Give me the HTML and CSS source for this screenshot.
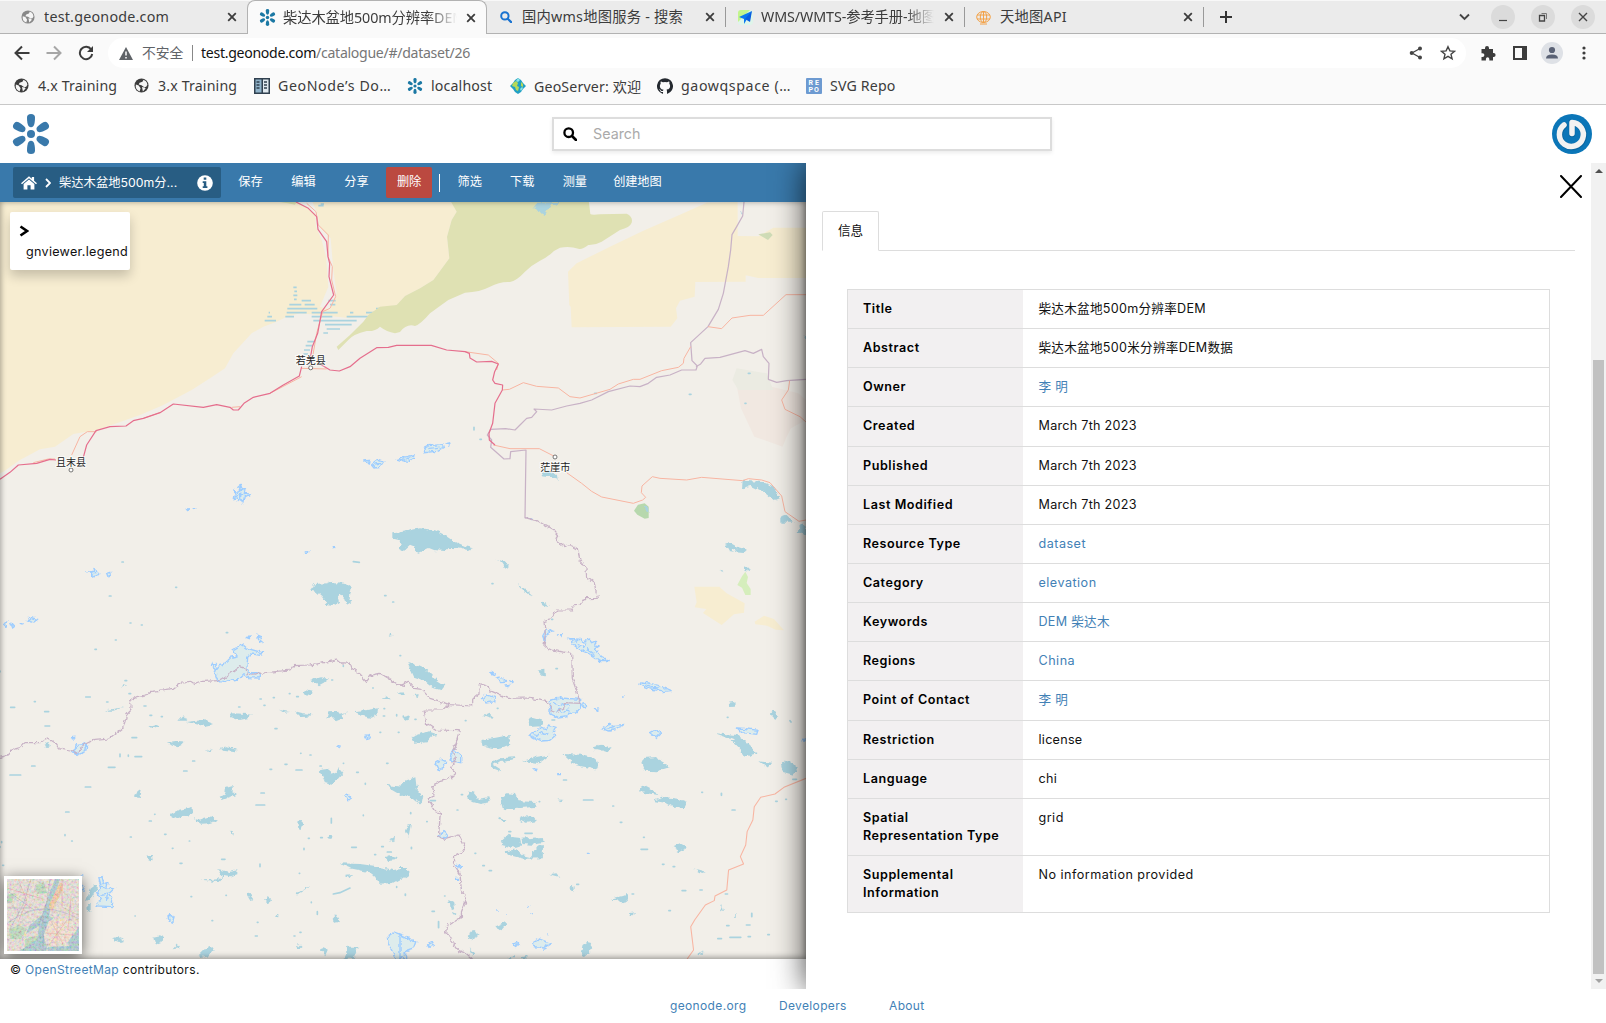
FILE: index.html
```html
<!DOCTYPE html>
<html lang="zh">
<head>
<meta charset="utf-8">
<title>柴达木盆地500m分辨率DEM</title>
<link rel="stylesheet" href="styles.css">
</head>
<body>
<svg class="defs" width="0" height="0">
  <defs>
    <symbol id="geonode" viewBox="0 0 38 40"><g fill="currentColor"><circle cx="19" cy="20" r="4"/><g id="petals"><path id="petal" d="M15 3.500Q15 0 19 0t4 3.500q0 6-1.500 8.500q-2.500 2.500-5 0Q15 9.500 15 3.500z"/><use href="#petal" transform="rotate(60 19 20)"/><use href="#petal" transform="rotate(120 19 20)"/><use href="#petal" transform="rotate(180 19 20)"/><use href="#petal" transform="rotate(240 19 20)"/><use href="#petal" transform="rotate(300 19 20)"/></g></g></symbol>
    <symbol id="globe" viewBox="0 0 16 16"><circle cx="8" cy="8" r="7.500" fill="currentColor"/><path d="M2 7l3 1 2 3-1 3.300A6.500 6.500 0 0 1 2 7zM8 1.600l2 .4-1 2-3 1-1 2 3 .6 3 2.200 2-.5 1.300-2A6.500 6.500 0 0 0 8 1.600zM8.500 9.500l2.500.5 1.500 1-3 3.400z" fill="#f5f5f5"/></symbol>
    <symbol id="x" viewBox="0 0 10 10"><path d="M1.200 1.200l7.600 7.600M8.800 1.200L1.200 8.800" stroke="currentColor" stroke-width="1.800" fill="none"/></symbol>
    <symbol id="mag" viewBox="0 0 14 14"><circle cx="5.700" cy="5.700" r="4.300" fill="none" stroke="currentColor" stroke-width="2.300"/><path d="M9 9l4 4" stroke="currentColor" stroke-width="2.600" stroke-linecap="round"/></symbol>
    <filter id="rough" x="-5%" y="-5%" width="110%" height="110%" color-interpolation-filters="sRGB"><feTurbulence type="fractalNoise" baseFrequency=".07" numOctaves="2" seed="7"/><feDisplacementMap in="SourceGraphic" scale="16" xChannelSelector="R" yChannelSelector="G"/></filter>
  </defs>
</svg>

<header class="tabstrip">
  <div class="tab t1"><svg class="i14 gray"><use href="#globe"/></svg><span>test.geonode.com</span><svg class="close"><use href="#x"/></svg></div>
  <div class="tab t2 active"><svg class="i17 teal"><use href="#geonode"/></svg><span class="fade">柴达木盆地500m分辨率DEM</span><svg class="close"><use href="#x"/></svg></div>
  <div class="tab t3"><svg class="i11 blue"><use href="#mag"/></svg><span>国内wms地图服务 - 搜索</span><svg class="close"><use href="#x"/></svg></div>
  <div class="tab t4"><svg class="i15" viewBox="0 0 15 15"><rect width="15" height="15" rx="3" fill="#dff5ea"/><path d="M0 3q0-3 3-3h9L0 12z" fill="#c3f58c"/><path d="M14 1L1 7l5 2v5z" fill="#0b78f0"/><path d="M14 1L7 9l5 3z" fill="#0a5ee0"/></svg><span class="fade">WMS/WMTS-参考手册-地图</span><svg class="close"><use href="#x"/></svg></div>
  <div class="tab t5"><svg class="i15" viewBox="0 0 15 15" fill="none" stroke="#f3a248" stroke-width="1"><ellipse cx="7.500" cy="7" rx="6.800" ry="5.500"/><ellipse cx="7.500" cy="7" rx="3.200" ry="5.500"/><path d="M1 5h13M1 9h13M7.500 1v12M4 14h7"/></svg><span>天地图API</span><svg class="close"><use href="#x"/></svg></div>
  <svg class="plus" viewBox="0 0 12 12"><path d="M6 0v12M0 6h12" stroke="#333" stroke-width="2"/></svg>
  <div class="wincontrols">
    <svg class="chev" viewBox="0 0 11 8"><path d="M1 1.500l4.500 4.500L10 1.500" fill="none" stroke="#444" stroke-width="1.900"/></svg>
    <span><svg viewBox="0 0 24 24"><path d="M8 15.500h8" stroke="#444" stroke-width="1.200"/></svg></span>
    <span><svg viewBox="0 0 24 24" fill="none" stroke="#444"><path d="M8.500 10.500h5v5.500h-5z" stroke-width="1.300"/><path d="M10.500 8.500h5v5.500" stroke="#777"/></svg></span>
    <span><svg viewBox="0 0 24 24"><path d="M8 8l8 8M16 8l-8 8" stroke="#444" stroke-width="1.400"/></svg></span>
  </div>
</header>

<nav class="toolbar">
  <svg class="nav" viewBox="0 0 16 16"><path d="M15.500 8H2M8 1.500L1.500 8 8 14.500" fill="none" stroke="#3c3c3c" stroke-width="2"/></svg>
  <svg class="nav" viewBox="0 0 16 16"><path d="M.5 8H14M8 1.500L14.500 8 8 14.500" fill="none" stroke="#a6a6a6" stroke-width="2"/></svg>
  <svg class="nav" viewBox="0 0 16 16"><path d="M13.200 4.500A6.200 6.200 0 1 0 14.200 9" fill="none" stroke="#3c3c3c" stroke-width="2"/><path d="M15 1v6H9z" fill="#3c3c3c"/></svg>
  <div class="omnibox">
    <svg class="warn" viewBox="0 0 14 13"><path d="M7 0l7 13H0z" fill="#5f6368"/><path d="M7 4.500v4M7 10v1.600" stroke="#fff" stroke-width="1.500"/></svg>
    <span class="insecure">不安全</span><i></i><span class="url"><b>test.geonode.com</b>/catalogue/#/dataset/26</span>
    <svg class="share" viewBox="0 0 14 14"><path d="M11 2.500L3 7l8 4.500" fill="none" stroke="#444" stroke-width="1.300"/><circle cx="11" cy="2.500" r="2" fill="#444"/><circle cx="2.700" cy="7" r="2" fill="#444"/><circle cx="11" cy="11.500" r="2" fill="#444"/></svg>
    <svg class="star" viewBox="0 0 16 16"><path d="M8 1.700l1.900 4.200 4.600.4-3.500 3 1.100 4.500L8 11.400l-4.100 2.400L5 9.300l-3.500-3 4.600-.4z" fill="none" stroke="#444" stroke-width="1.400"/></svg>
  </div>
  <svg class="nav ext" viewBox="0 0 16 16"><path d="M1.500 4H5V3a2 2 0 0 1 4 0v1h4v4h.6a2 2 0 0 1 0 4H13v3.500H9.300V14a1.700 1.700 0 0 0-3.400 0v1.500H1.500V12H2.500a1.800 1.800 0 0 0 0-3.800h-1z" fill="#3c3c3c"/></svg>
  <svg class="side" viewBox="0 0 14 14"><path d="M1 1h12v12H1z" fill="none" stroke="#3c3c3c" stroke-width="2"/><path d="M9 0h5v14H9z" fill="#3c3c3c"/></svg>
  <svg class="person" viewBox="0 0 22 22"><circle cx="11" cy="11" r="11" fill="#dee1e6"/><circle cx="11" cy="8" r="3.100" fill="#5a6275"/><path d="M5 16.500q0-4 6-4t6 4z" fill="#5a6275"/></svg>
  <svg class="dots" viewBox="0 0 4 14"><g fill="#3c3c3c"><circle cx="2" cy="2" r="1.600"/><circle cx="2" cy="7" r="1.600"/><circle cx="2" cy="12" r="1.600"/></g></svg>
</nav>

<nav class="bookmarks">
  <a class="b1"><svg class="i15"><use href="#globe"/></svg>4.x Training</a>
  <a class="b2"><svg class="i15"><use href="#globe"/></svg>3.x Training</a>
  <a class="b3"><svg class="i16" viewBox="0 0 16 16"><path fill="#30404f" d="M0 0h16v16H0z"/><path fill="#8fb2c9" d="M1.500 1.500h6v13h-6z"/><path fill="#dfe8ee" d="M9 1.500h5.500v13H9z"/><path d="M2.500 4h3M2.500 7h3M2.500 10h3M10 4h3M10 7h3M10 10h3" stroke="#30404f" stroke-width="1.400"/></svg>GeoNode’s Do…</a>
  <a class="b4"><svg class="i16 teal"><use href="#geonode"/></svg>localhost</a>
  <a class="b5"><svg class="i16" viewBox="0 0 16 16"><path fill="#21a0c4" d="M8 0l3 2 2 3 3 3-3 3-2 3-3 2-3-2-2-3-3-3 3-3 2-3z"/><path fill="#b6d957" d="M3 5l3-2 2 2-1 3 2 1-1 4-2-1-1-3-3-1zM11 4l2 2v3l-2-1z"/><path fill="#8ee4e4" d="M8 0l2 2-2 2-2-1zM12 9l1 1-2 3-1-2z"/></svg>GeoServer: 欢迎</a>
  <a class="b6"><svg class="i16" viewBox="0 0 16 16"><path fill="#24292f" d="M8 .2a8 8 0 0 0-2.530 15.600c.4.070.55-.17.55-.38v-1.500c-2.230.48-2.700-.95-2.700-.95-.36-.92-.89-1.170-.89-1.170-.73-.5.050-.49.050-.49.800.06 1.230.83 1.230.83.720 1.220 1.870.87 2.330.66.070-.52.280-.87.500-1.070-1.780-.2-3.640-.89-3.640-3.950 0-.87.310-1.590.82-2.150-.08-.2-.36-1.020.08-2.120 0 0 .670-.21 2.200.82a7.600 7.600 0 0 1 4 0c1.530-1.040 2.200-.82 2.200-.82.440 1.100.160 1.920.080 2.120.510.560.820 1.270.820 2.150 0 3.070-1.870 3.750-3.650 3.950.290.250.540.730.540 1.480v2.200c0 .21.150.46.550.380A8 8 0 0 0 8 .2z"/></svg>gaowqspace (…</a>
  <a class="b7"><svg class="i16" viewBox="0 0 16 16"><rect width="16" height="16" rx="1" fill="#6d9ad1"/><g fill="#fff" font-family="Roboto" font-size="7" font-weight="700"><text x="2.600" y="7.300" textLength="10.500">RE</text><text x="2.600" y="14.300" textLength="10.500">PO</text></g></svg>SVG Repo</a>
</nav>

<section class="brandbar">
  <svg class="logo"><use href="#geonode"/></svg>
  <label class="search"><svg><use href="#mag"/></svg><span>Search</span></label>
  <svg class="avatar" viewBox="0 0 40 40"><circle cx="20" cy="20" r="20" fill="#0b76b8"/><g fill="none" stroke-linecap="round"><path d="M12.500 11.500A12 12 0 1 0 20 9v11" stroke="#07568a" stroke-width="6.500" opacity=".5"/><path d="M12 11A12 12 0 1 0 20 8.500v11" stroke="#f2f2f2" stroke-width="5.500" stroke-linejoin="round"/></g></svg>
</section>

<main class="workspace">
  <div class="viewer">
    <nav class="actions">
      <div class="crumb">
        <svg class="home" viewBox="0 0 16 14"><path d="M0 7.200L8 .3l2.800 2.400V1h2.300v3.700L16 7.200l-1 1.100L8 2.300 1 8.300z" fill="#fff"/><path d="M2.600 8L8 3.500 13.400 8v5.500H9.600V9.300H6.400v4.200H2.600z" fill="#fff"/></svg>
        <svg class="arrow" viewBox="0 0 6 10"><path d="M1 1l4 4-4 4" fill="none" stroke="#fff" stroke-width="1.800"/></svg>
        <span>柴达木盆地500m分...</span>
        <svg class="info" viewBox="0 0 16 16"><circle cx="8" cy="8" r="7.800" fill="#fff"/><path d="M6.700 2.500h2.600v2.300H6.700zM5.700 6.200h3.600v5h1.100v1.700H5.700v-1.700h1.100V7.900H5.700z" fill="#285d83"/></svg>
      </div>
      <a>保存</a><a>编辑</a><a>分享</a><a class="danger">删除</a><i></i><a>筛选</a><a>下载</a><a>测量</a><a>创建地图</a>
    </nav>
    <div class="map">
      <svg class="canvas" viewBox="0 202 806 757" preserveAspectRatio="none">
        <!-- land cover -->
        <g transform="translate(0 160) scale(.33333)">
          <path class="sand" d="M0 120H1352L1370 155 1355 180 1341 230 1348 295 1315 340 1300 360 1260 385 1215 408 1190 435 1140 445 1105 465 1050 475 1010 470 900 460 860 470 830 485 790 500 755 520 700 580 675 625 630 655 575 690 490 735 420 765 350 790 290 810 220 822 165 860 120 868 60 900 10 935 0 940z"/>
          <path d="M885 120H935L952 160 962 205 992 235 1000 330 1010 400 990 450 960 440 985 380 978 290 965 240 948 200 945 160z" fill="#f2efe9"/>
          <path d="M840 126h50l-5 8-22-4z" fill="#dce0b0"/>
          <path class="stripe" d="M880 382h10M883 394h8M880 406h12M882 418h8M905 422h28M868 434h36M914 434h30M862 446h90M860 458h60M935 458h78M856 470h26M935 470h62M1050 458h10M1098 458h34M1040 470h64M1128 446h12M960 482h110M975 494h80M940 482h20M980 507h40M970 519h14M806 458h4M802 470h14M794 482h34M922 545h22M917 557h20M912 570h18M910 582h14M985 422h22M990 434h16M955 137h16M962 132h10"/>
        </g>
        <g transform="translate(400 190) scale(.33333)">
          <path class="scrub" d="M150 30H566L571 72Q575 76 600 73L680 71Q700 80 695 98Q690 112 660 120L605 155Q585 166 565 165Q545 180 535 176Q510 168 480 173L462 183Q445 200 420 212Q395 225 375 245Q350 272 330 276Q300 274 270 290Q240 306 195 308L145 330Q110 355 90 370Q60 405 45 408Q20 400 0 426L-15 430Q-40 425-60 410-75 425-100 423Q-140 432-155 450L-185 480-190 470-150 435-110 395-95 375-60 350-10 345 15 318 60 295 100 270 115 250 148 205 141 140 155 90 170 65z"/>
          <path class="sand" d="M504 245L530 220 630 170 730 122 850 70 920 38 1013 36V138L1075 139 1120 113H1218V264H1075L1037 256V275L886 276 884 320 840 332 828 355 832 385 812 410 515 412 512 350 508 345z"/>
          <path class="water" d="M400 55L412 38 478 36 470 50 455 40 435 75zM1020 72l6-10 2 12zM425 848l18-8 28 15 2 14-25-8-24-2z"/>
          <path d="M1075 133l35-6 8 8-14 15z" fill="#cfdcb7"/>
          <path d="M1005 560l10-15 100 45 80 20 23 20v60l-45 25-15 30-10 25-85-30-40-85z" fill="#f1e8e1"/>
          <path d="M1010 535l90 15 20 50h-105l-18-30z" fill="#ebebe2"/>
          <path d="M702 962l12-18 20-4 12 10v34l-12 2-22-12z" fill="#b7d8ad"/>
          <path class="water" d="M735 950l10 2v15l-8-4zM1028 872l60 4 30 12 22 35-18 8-32-26-36-18-28 8zM1141 980l18-6 25 24h-43zM1213 440h5v12z"/>
          <path class="dot" d="M584 610h5M868 613h5M222 712v8M240 748h4M1045 550h5M1035 640h3"/>
          <path class="ice" d="M72 775l15-8 40-3 3 8-22 12-34 4zM85 776l30-4M138 761l10-2-2 6zM2 802l18-2 22-6-2 12-10 8-26-2zM14 808l16-6"/>
        </g>
        <!-- glaciers and lakes, north -->
        <g transform="translate(0 160) scale(.33333)"><path class="ice" d="M1090 903l18-2-2 8zM1115 912l18-14 18 6-12 18-14 2zM1122 912l22-2M1192 898l20-6v12zM712 983l10-8 8 14"/></g>
        <g transform="translate(0 480) scale(.33333)">
          <path class="ice" d="M722 15l2 15 12-6-3 16 18 2-2 6-16 4-4 16-6-10-8 6-2-10-12 2 8-10-6-14 12 8zM716 44l20 0M722 36v20M557 88l10-2 1 4-8 2zM581 86h5M264 276l20 2-2-12 6 2 8 16-12 6zM320 280l12-4 2 8-10 6zM916 216l10-1-1 5-8 1zM998 200h8M10 432l10-6-2 14zM32 428l6 16 5-4zM80 426l10-14 22 6-10 8-14-4zM62 432l6-2M738 472l12-1-2 5zM772 466l10 4 4 14-6 2zM635 556l10-6 8 10-6 7zM695 512l30-18 12 10 50 14-4 8-30-4-10 10-2 30 8 15 32 2v15l-36-1-15-10-15 15-22 2-20 8-20-6-10-28 15-17 15-5 20-20 18-4-2-10zM222 806l8-12 10 4 16-8 4 6-2 14zM214 773l10-1-2 5zM1095 770l10-3 4 8-8 4zM1012 798h8v4"/>
          <path class="water" d="M1177 160l38-4v55l-18-30-20-5zM929 332l15-20 38-2 12-5 10 5 32 1 16 12-6 32 8 12-15 8-2-16-14-16-10 10 4 15-10 8-25-3-18-25-15-13zM930 600l30-8 26 4-15 12-14 8-12-8zM910 638l10-10 18 4-3 16-20-2zM690 710l8-10 42 2 16 2-10 10-30 6zM560 726l50-6 32 12-30 6zM535 722l15-16 12 16zM885 694l24 6 26 2-10 8-22 1zM838 690l34 6-20 2zM985 694l30-2 5 12 25-8-20 10 5 10-20 8-10-12-20 2zM1060 694l40-4 34-5-2 18-20 10-20-4-16-8zM1142 656l18-10 12 12zM1163 470l12-12 2 10zM505 790l40-6 10 6-30 8zM360 620l12-8 10 4zM448 738l22-6 10 5-22 8zM310 692l60-10-30 10zM655 808l20-5 35 1v4zM1192 640l22-2v7zM136 790l10-4 3 12-8 3z"/>
          <path class="dot" d="M366 246h4M527 322h3M328 348h5M679 458h4M285 508h4M390 429h3M424 435h3M346 480h3M1178 366h3M1154 347h4M375 602h5M387 641h5M257 651h14M320 666h4M103 665h3M32 682h12M134 695h12M135 738h14M396 773h14M432 678h6M450 706h5M484 710h3M716 681h4M780 657h4M820 653h3M890 650h5M868 641h2M995 600h3M1152 686h2M1118 624h2M1030 557v2M1190 704v4M1210 708v3M1060 245l18 2M825 746h6M792 676h3M0 573v3M1140 757h2M1195 757h2M1150 708h4"/>
        </g>
        <g transform="translate(400 480) scale(.33333)">
          <path class="water" d="M0 157l30-6 30-6 45 6 25 12 30 20 35 15 27 7-20 5-35-6-28 1-5 8-32-3-15-6-32 14-10-6v-12l-15-6-20 18-10-5zM288 236l26 10 12 14-4 10-10-8-8-12zM353 312l18 12 28 22-22-8zM421 366l10-1 16 13-18-4zM22 546l20 6 40 18 26 28 28 18-12 15-26-8-34-25-22-8zM413 572l20-3 2 20-8-2zM977 195l14-6 22 12 28 8-10 10-26-2 4-14-12 4 4 8-14-2zM957 272l14 4-8 2zM1030 276l4-14 16 6zM1188 156l20-24 10 8v24zM989 668l14-2 2 14-14 1zM1110 700l8-6 20 14-10 8-12-4zM942 760l70 5 24 18 24 26h-28l-34-30zM384 720l15-6 32 10-5 15-35 2zM245 780l42-7 42-8v22l-24 18-30-2-28-6zM38 770l46-16 32 10-20 5-16 18-36 4zM578 802l28-8 28 14h-50zM250 706l16-8 18 15-18-1zM40 646l16-4-4 12zM5 712l25-6-5 18z"/>
          <path class="dot" d="M276 311h3M468 566h4M455 418h3M0 527h2M0 640h10M45 718h3M292 685h2M196 722h2M1170 722l3 4M982 712h2M456 720h8"/>
          <path d="M883 320h75l22 20 54 30-2 28-30 5-37 32-56-36 10-12-35-5 6-15zM1064 425l28-18 30 10 30 34-25-2-26-12-35-4z" fill="#f7edd1"/>
          <path d="M1036 275l-10 14-14 26 14 8 10 22h16v-18l-12-18 4-18z" fill="#d5eebc"/>
          <path class="ice" d="M388 116l10 1-2 5zM428 468l10-18 18 4-16 8-6 22zM478 464h8l-3 5zM509 476l20 8 12-10 8 12 20-6 6 8 14-6-6 16 12 2-10 6 20 24 24 12h-30l-30-20-24-10-20-14zM530 492l20 8 8-12M560 508l20 14M265 578l10-1 12 8zM290 594l16-4 12 14-16 1zM326 602l12 3-5 3zM312 616l14-2-2 6zM718 614l12-8 20 4 24 6 20 8 18 8-25 3-35-8zM735 614l20 8 20 2M245 655l15-10 26 8-2 12-26 4zM452 660l30-6 60 4v25l-15 16-22 2-2 9-28 4-22-12-5-18zM462 670l14 8 14-8 16 10M466 696l12-8 12 10 10-8 12 4M544 675l10-4 8 8-8 6zM582 686l12 1-4 4zM385 764l20-10 15-12 20 4 8-10 20 6-8 14 4 15-12 10-28 2-24-10zM400 764l14 4 12-12 16 8M605 746l22-16 16 6 25-2-15 12-24 7zM620 746l22-6M749 758l14-8 20 8-15 15zM1012 744l20 1 42 6-4 12-45-5zM666 651h8M1209 779h8"/>
        </g>
        <!-- lakes, south -->
        <g transform="translate(0 740) scale(.33333)">
          <path class="ice" d="M218 36l18-20 22-4-4 20-20 14zM1034 168l10-6 10 12-10 8zM1012 19h8M242 408h8M246 432q12 8 2 24M288 498l14-22-10-22 12-12-8-28 10-4 6 24 12-4-4 14 22 2-14 14 10 12-4 14 4 14zM298 440l24 6M302 466l20-4-2 18M504 530l8-6 10 14v12l-10-4zM1162 590l20-14 20 8 15 20v52h-30l-10-22-12-20z"/>
          <path class="water" d="M500 10l30-5 24 5-20 9zM658 28l22-6 34 8-10 4zM612 36l25-8v4zM405 172l10-24 10 4-5 22zM660 172l16-10 2-18 20-6v18l10 10-20 6-20 8zM508 226l30-16 36-9 5 22-30 6-22 8zM578 234l20 6 14 -6 14-4 25 12-25 8-24 1zM892 248l8-10 9 12-4 20-10-2zM958 90l30-4 2 16 20-6 6-14 14 16-16 18-18 18-20-4-8-20zM1162 134l20 4 34 2v22l-26-4-18-10zM1016 370l64 2 44 6 56 12 32-4-2 25-32 18-42 2-10-20-16-14-60-12zM600 422l52-4 14-10-14-20 14 2 20 6 26-5v15l-20 6-20-4-16 18zM442 350l14 -2 2 12-8 5zM258 484l14-38 18-14v16l-15 26zM258 492h14v22l-10 4zM738 460l8-2 14 20-10 3zM792 482l14-10 10 6-6 10zM884 462l24-14 25-11-22 14-18 12zM1042 452l8-5M994 462l14-5M998 536l10-10 12 20-18 2zM460 590l20-4 10 5-2 14-24 10zM518 625l14-16 8 12zM596 646l18-18 18-10 10 8-20 24-20 4zM336 598l20-6 18 12-14 2zM825 530l10-12v14zM1034 656l8-36h36l-12 10-4 26zM960 628l10-6 14 6-8 18zM890 618l6-5 9 8-8 6zM1156 352l14-6 20 4-4 8-24 2zM984 290l10-6 7 10-12 3zM692 272l10 2-2 13zM1168 298l14-8-2 14zM1036 404l20-2-8 10z"/>
          <path class="dot" d="M142 10v10M360 42v8M385 45v4M405 50h20M325 82h20M95 78h10M30 105h32M256 141h16M197 216h10M551 93h10M578 63h6M783 159h10M768 195h26M810 88h5M888 90h18M902 40h1M930 45h3M1030 70h1M960 78h4M1096 130v3M994 235v14M1090 225v2M195 284v3M215 303h2M391 291h3M494 283h4M540 370h6M517 325h2M568 303h1M464 223h1M448 243h6M665 358h10M780 372v8M573 470h2M405 528h1M636 542h2M766 588h6M678 466h1M952 515v8M934 486v2M900 577h3M882 588h3M912 325v4M925 295h3M962 293h5M1055 322h14M1124 344h3M1162 336h12M1145 320h5M0 320v2M5 305v3M8 376h3M1070 97h5M1160 70h4M1190 440v2M855 73h6M898 400h1M772 547h2M1000 462l20-4 30-14"/>
        </g>
        <g transform="translate(400 740) scale(.35714 .33333)">
          <path class="ice" d="M138 52l14-24 18 18v22l-20-4zM98 70l18-12 14 8-8 16-14 8zM108 290l16-18 8 8-4 14zM158 372l14 8-4 6zM154 415h10M0 585l10 5 14 8 20 8-6 18-18 6-18 24H0zM78 614l12-7 4 8-10 7zM318 612l8-5 5 8-8 4zM372 610l20-12 30 12-20 14-24-4zM375 87l8 1-2 5zM440 101h8M526 340h8M295 522h4M270 510h4M358 498h4M368 521h4M410 584h5M1127 0h10M172 443v3"/>
          <path class="water" d="M228 2h76l2 12-30 12-40-10zM42 0h26l-10 8zM255 68l30-14 40-2-4 6-44 6-16 12 30 20-36-14zM345 62l40-12 34-6-14 14-16 12zM455 42l50 2 45 12 7 24-12 8-22-6-30-6-22-18zM538 22l25-8 30 12-14 10zM676 68l6-14 38-3 12 16 24 14-24 8-12 8-34-2zM925 0h30l14 18 36 20-40 12-14-22zM1067 72l14-10 26 10 5 20-10 12-30-8zM1006 64l36 4-10 16zM0 140l15-18 28-10 4 36 18 22-4 20-22-8-18-16-22 2zM672 146l16-9 22 12 10 16-20-4-26-4zM708 182l28-12 44 6 24 10-6 14-30 4-26-16zM192 154l14 4 14 18 30-4 4 14-30 6-32-10zM280 176l20-16 22 2 10 22 50 2v14l-44 4-22 6-28-4zM278 230l20 8-10 8zM332 236l20-10 30 10v8l-28 4zM284 304l18-20 14 8 20 2 5 24-18 6-36-8zM340 296l60-5 2 18-32 5-26-2zM296 334l30-6 18 18 20 5 18-30 18-6v40l-54 1-44-12zM762 320l22-10 21 12-22 12zM418 402l20-2 8 10zM474 444l10-10 4 22zM590 476l32-8 14-6 2 24-18 4-12-12zM640 520l20-3-15 14zM820 385l36 10-10 4zM194 576l18-4 8 14-20 12-10-8zM270 558l25-12 2 8-16 20zM512 614l12-8 14 4-6 26-14 12-12-6zM195 624l12 16-4 4zM302 652l20-3v6h-20zM344 648l10-3v12h-10zM0 384h22l2 20-16 12H0zM138 480l10 5 4 20-10 2zM148 512l10 6-4 8zM14 272l8-20 8 4-6 34zM835 642l18-8-14 12zM896 510l6-15 5 18zM932 534l8-12v12zM437 178l20 2-6 4z"/>
          <path class="dot" d="M15 462v4M32 322v4M85 182h14M90 514h6M108 545v18M160 210h2M172 164h3M210 340h2M232 377h4M250 392h6M305 275h5M350 280h20M514 180h26M617 247h4M596 198h2M675 328h18M682 292h2M735 373h4M765 380h4M790 452h10M840 450h6M911 462h6M753 512h4M458 120h8M900 160v6M1080 178h2M1052 184h4M930 210h8M845 157h2M890 596h10M924 592h30M975 590h6M985 520v10M915 557h6M970 555h10M1030 584h4M125 468h1M650 462h4M30 218v3M75 245h1M495 433h5M1100 118h10M390 185h1"/>
        </g>
        <!-- boundaries -->
        <g class="border">
          <g transform="translate(400 190) scale(.33333)"><path d="M1032 36L1028 78 1010 110 996 134 992 180 985 230 970 310 955 358 924 410 872 458 876 512 892 528 888 540 845 540 810 555 770 562 745 580 720 590 690 588 625 605 575 630 540 640 500 648 455 660 402 657 410 665 395 682 380 685 360 705 345 720 317 716 272 718 262 735 275 750 272 772 312 807 330 806 332 785 378 780 375 983 400 990M888 530L902 522 915 505 960 502 1035 482 1060 490 1085 478 1090 500 1107 520 1105 568 1130 577 1160 572 1218 568"/></g>
          <g transform="translate(400 480) scale(.33333)"><path class="wavy" d="M375 113L412 122 460 150 473 165 468 180 492 200 510 194 532 206 540 240 558 265 560 292 583 308 592 355 552 356 540 375 520 378 515 390 470 390 445 420 432 425 436 460 432 500 455 510 515 520 517 595 530 630 540 670 495 668 490 685 470 696 455 690 440 665 410 658 378 654 325 655 270 632 266 620 238 610 237 640 218 655V678L150 674 90 655 65 628 42 625 25 604 0 616M150 672L130 690 72 690 80 730 110 750 178 752 170 780 165 810"/></g>
          <g transform="translate(0 480) scale(.33333)"><path class="wavy" d="M1215 616L1195 614 1170 598 1140 580 1115 585 1100 604 1080 582 1055 565 1050 550 1020 548 1010 540 985 545 930 555 880 557 870 570 800 578 742 584 738 565 720 560 690 582 658 602 610 604 587 612 575 604 545 606 520 625 450 635 440 645 410 650 392 660 393 690 380 705 368 745 330 774 285 778 250 795 240 810 232 820 210 810 175 803 165 788 142 774 120 788 75 788 60 803 40 808 25 825 0 832"/></g>
          <g transform="translate(400 740) scale(.35714 .33333)"><path class="wavy" d="M162 0L150 35 155 58 142 80 158 96 135 118 110 125 92 138 95 165 80 182 95 210 113 218 108 290 125 298 165 285 182 320 172 338 150 348 150 372 168 400 172 455 186 480 172 515 172 532 150 547 130 560 128 575 142 600 165 632 185 640 203 657"/></g>
        </g>
        <!-- roads -->
        <g class="secondary">
          <g transform="translate(400 190) scale(.33333)"><path d="M195 485L265 495 295 520 290 540M307 600L328 598 370 578 410 589 475 594 510 620 540 624 630 598 655 582 700 568 720 568 785 542 835 532 850 520 852 505 872 470M924 410L965 416 996 384 1050 376 1090 376 1158 314H1218M280 765L330 776H418L465 800M500 848L545 880 575 904 605 921 700 940 728 930 737 922 724 908 726 888 757 860 780 865 860 870 905 862 1028 872 1045 866 1085 870 1110 878 1145 918 1155 965 1197 994 1218 990M1169 572L1165 600 1145 630 1155 658 1200 680 1218 696"/></g>
          <g transform="translate(0 160) scale(.33333)"><path d="M920 130L948 155 955 195 985 225 984 290 997 320 995 360 1007 410 990 445 968 455 950 520 938 590M904 625L980 627M905 650L810 700M720 740L695 742M480 758L430 775M290 815L262 815 240 830 215 885M100 908L145 897 165 897"/></g>
          <g transform="translate(400 740) scale(.35714 .33333)"><path d="M1137 115L1075 142 1050 162 1010 172 992 200 988 240 972 275 968 315 953 350 962 372 920 390 915 450 882 468 880 482 855 495 825 540 814 560 822 630 804 657"/></g>
        </g>
        <g class="trunk">
          <g transform="translate(0 160) scale(.33333)"><path d="M888 126L925 145 950 170 954 208 980 245 984 290 989 310 987 350 1001 405 965 455 953 520 937 560 930 600M960 612L990 630 1018 633 1050 620 1080 595 1130 563 1165 562 1190 556 1294 556 1340 570 1395 575 1408 580 1410 594 1430 606 1475 604 1495 612 1484 635 1478 660 1485 670 1508 675 1507 690 1485 730 1478 790 1467 820 1468 840 1485 855M905 620L898 648 850 675 810 700 760 712 732 730 715 750 700 750 690 742 650 734 610 742 520 732 480 758 430 775 400 782 378 798 330 800 288 812 260 855 250 892M168 900L150 898 110 910 55 915 30 937 0 958"/></g>
        </g>
        <g class="place"><circle cx="310.700" cy="367.800" r="2"/><text x="310.700" y="363.500">若羌县</text><circle cx="71" cy="470" r="2"/><text x="71" y="466">且末县</text><circle cx="555" cy="457" r="2"/><text x="555.300" y="471">茫崖市</text></g>
      </svg>
      <div class="legend"><svg viewBox="0 0 10 12"><path d="M1.500 1.500L8 6l-6.500 4.500" fill="none" stroke="#000" stroke-width="2.600"/></svg><span>gnviewer.legend</span></div>
      <svg class="basemap" viewBox="0 0 72 72">
        <defs><filter id="grain" x="0" y="0" width="100%" height="100%"><feTurbulence type="fractalNoise" baseFrequency=".4" numOctaves="3" seed="4"/><feColorMatrix values="2 0 0 0 -.35  0 2 0 0 -.35  0 0 2 0 -.35  0 0 0 0 1"/></filter></defs>
        <path fill="#e8ddd3" d="M0 0h72v72H0z"/>
        <path fill="#b9d6b4" d="M28 6l9-3 3 11-10 1zM2 50l10-4 8 4-6 10H3zM18 60l12-3 6 6-4 9H18zM60 62l12-8v10l-9 5zM0 16l8-2-3 10H0z"/>
        <path fill="#a4c6cc" d="M48 0h5L46 23l-4 14 4 2-6 10-3 9 4 14H12l18-11 2-14-13 8 3-8 14-12 5-17zM72 48L61 62l2 5-22 1-2 4h33z"/>
        <path d="M52 5q6-4 3 7L45 32q-6-2 0-12z" fill="#f5c49a"/>
        <path fill="#f5e0cf" d="M42 42l18-3 10 11-9 13-16 3-8-10z"/>
        <g fill="none" stroke-width=".6" opacity=".65"><path stroke="#7d86ad" d="M2 43q20-14 37-13t33 10M36 36v36M43 0l-3 22-8 24M0 29h23M2 13l25 18M24 0l-8 26L3 50"/><path stroke="#de7d72" d="M50 39v29M38 54l28 2M44 42l12 23M60 41L42 66M64 17l-3 34M55 0v28l16 8M11 0l9 22-9 21M0 9l36 11"/></g>
        <path filter="url(#grain)" opacity=".27" d="M0 0h72v72H0z"/>
      </svg>
    </div>
    <div class="credit">© <a>OpenStreetMap</a> contributors.</div>
  </div>

  <aside class="details">
    <div class="detailbody">
      <div class="closebar"><svg viewBox="0 0 22 23"><path d="M1 1l20 21M21 1L1 22" stroke="#000" stroke-width="2" stroke-linecap="round"/></svg></div>
      <div class="detailtabs"><span>信息</span></div>
      <dl>
        <dt>Title</dt><dd>柴达木盆地500m分辨率DEM</dd>
        <dt>Abstract</dt><dd>柴达木盆地500米分辨率DEM数据</dd>
        <dt>Owner</dt><dd><a>李 明</a></dd>
        <dt>Created</dt><dd>March 7th 2023</dd>
        <dt>Published</dt><dd>March 7th 2023</dd>
        <dt>Last Modified</dt><dd>March 7th 2023</dd>
        <dt>Resource Type</dt><dd class="wide"><a>dataset</a></dd>
        <dt>Category</dt><dd class="wide"><a>elevation</a></dd>
        <dt>Keywords</dt><dd><a>DEM 柴达木</a></dd>
        <dt>Regions</dt><dd class="wide"><a>China</a></dd>
        <dt>Point of Contact</dt><dd><a>李 明</a></dd>
        <dt>Restriction</dt><dd>license</dd>
        <dt>Language</dt><dd>chi</dd>
        <dt>Spatial<br>Representation Type</dt><dd class="wide">grid</dd>
        <dt>Supplemental<br>Information</dt><dd class="wide">No information provided</dd>
      </dl>
    </div>
    <div class="scroll"><svg viewBox="0 0 8 4"><path d="M0 4l4-4 4 4z" fill="#505050"/></svg><i></i><svg viewBox="0 0 8 4"><path d="M0 0l4 4 4-4z" fill="#a3a3a3"/></svg></div>
  </aside>
</main>
<footer><a>geonode.org</a><a>Developers</a><a>About</a></footer>
</body>
</html>
```
FILE: styles.css
```css
* { box-sizing: border-box; }
body { margin: 0; width: 1606px; height: 1023px; overflow: hidden; background: #fff; font-family: Inter, "Noto Sans CJK SC", sans-serif; font-size: 12.6px; color: #111; display: flex; flex-direction: column; }
svg { display: block; flex: none; }
.defs { position: absolute; }
.i11 { width: 12px; height: 12px; }
.i14 { width: 14px; height: 14px; }
.i15 { width: 15px; height: 15px; }
.i16 { width: 16px; height: 16px; }
.i17 { width: 17px; height: 17px; }
.gray { color: #888; }
.teal { color: #1b78a4; }
.blue { color: #1a73d0; }

/* browser chrome */
.tabstrip, .toolbar, .bookmarks { font-family: "Noto Sans", "Noto Sans CJK SC", sans-serif; color: #3c3c3c; display: flex; align-items: center; flex: none; }
.tabstrip { height: 34px; background: #ebebeb; border-top: 1px solid #f8f8f8; border-bottom: 1px solid #b2b2b2; font-size: 14.300px; }
.tab { display: flex; align-items: center; height: 20px; white-space: nowrap; overflow: hidden; letter-spacing: .22px; }
.tab span { flex: 1; overflow: hidden; line-height: 20px; }
.tab .close { width: 10px; height: 10px; }
.fade { -webkit-mask-image: linear-gradient(90deg, #000 calc(100% - 28px), transparent); mask-image: linear-gradient(90deg, #000 calc(100% - 28px), transparent); margin-right: 8px; }
.t1 { width: 247px; padding: 0 10px 0 21px; gap: 9px; }
.t2 { width: 240px; padding: 0 10px 0 11px; gap: 7px; }
.t2 .fade { letter-spacing: -.1px; margin-right: 2px; }
.t3 { width: 239px; padding: 0 10px 0 13px; gap: 10px; }
.t4 { width: 239px; padding: 0 10px 0 12px; gap: 8px; }
.t4 .fade { letter-spacing: -.1px; margin-right: 2px; }
.t5 { width: 239px; padding: 0 10px 0 11px; gap: 9px; }
.t3, .t4, .t5 { border-right: 1px solid #999; }
.tab.active { height: 34px; align-self: flex-start; background: #fafafa; border: 1px solid #b2b2b2; border-bottom: 0; border-radius: 8px 8px 0 0; margin-top: -1px; margin-bottom: -2px; }
.plus { width: 12px; height: 12px; margin-left: 16px; }
.wincontrols { margin-left: auto; display: flex; align-items: center; gap: 16px; padding-right: 11px; }
.wincontrols span { width: 24px; height: 24px; border-radius: 50%; background: #dbdbdb; }
.chev { width: 11px; height: 8px; margin-right: 5px; }
.toolbar { height: 38px; background: #fafafa; padding: 0 20px 0 14px; }
.nav { width: 16px; height: 16px; margin-right: 16px; }
.omnibox { width: 1358px; height: 30px; margin-left: -2px; border-radius: 15px; background: #fff; display: flex; align-items: center; padding: 0 10px 0 11px; font-size: 14.100px; }
.warn { width: 14px; height: 13px; }
.insecure { width: 50px; padding-left: 9px; font-size: 13.800px; color: #5f6368; white-space: nowrap; padding-bottom: 2px; }
.omnibox i { width: 1px; height: 16px; background: #888; margin: 0 8px 0 9px; }
.url { color: #777; flex: 1; letter-spacing: -.3px; padding-bottom: 2px; }
.url b { color: #111; font-weight: 400; }
.share { width: 14px; height: 14px; margin-right: 17px; }
.star { width: 16px; height: 16px; }
.ext { margin: 0 17px 0 14px; }
.side { width: 14px; height: 14px; margin-right: 14px; }
.person { width: 22px; height: 22px; margin-right: 19px; }
.dots { width: 4px; height: 14px; }
.bookmarks { height: 33px; background: #fafafa; border-bottom: 1px solid #c8c8c8; padding: 0 0 5px 14px; font-size: 14.200px; letter-spacing: .15px; }
.bookmarks a { display: flex; align-items: center; gap: 9px; white-space: nowrap; flex: none; }
.b1 { width: 120px; } .b2 { width: 120px; } .b3 { width: 153px; } .b4 { width: 103px; } .b5 { width: 147px; } .b6 { width: 149px; }
.b3, .b6 { letter-spacing: .6px; }
.bookmarks .b3, .bookmarks .b4, .bookmarks .b5, .bookmarks .b6, .bookmarks .b7 { gap: 8px; }

/* site header */
.brandbar { height: 58px; flex: none; display: flex; align-items: center; justify-content: space-between; padding: 0 14px 0 12px; }
.logo { width: 38px; height: 40px; color: #3979ab; }
.avatar { width: 40px; height: 40px; }
.search { width: 500px; height: 34px; margin-left: 2px; border: 2px solid #ddd; box-shadow: 0 2px 4px rgba(0,0,0,.08); display: flex; align-items: center; padding-left: 9px; color: #aaa; font-size: 14.300px; gap: 16px; }
.search svg { width: 14px; height: 14px; color: #000; }
.search span { padding-bottom: 1px; }

.workspace { height: 826px; display: flex; flex: none; }
.viewer { width: 806px; display: flex; flex-direction: column; }
.actions { height: 39px; background: #3979ab; color: #fff; display: flex; align-items: center; padding-left: 13px; font-size: 12.200px; flex: none; }
.actions > a { padding: 0 14.300px; line-height: 29px; height: 31px; white-space: nowrap; }
.actions > i { width: 1px; height: 18px; background: #fff; margin: 0 3px 0 7.500px; }
.actions > i ~ a { padding: 0 14.100px; }
.actions > a:last-child { margin-left: -2px; letter-spacing: -.1px; }
.actions .danger { background: #bb4940; border-radius: 2px; width: 46px; padding: 0 11px; margin: 0 0 0 3px; }
.crumb { width: 208px; height: 31px; border-radius: 2px; background: #285d83; display: flex; align-items: center; padding: 0 8px; margin-right: 3px; }
.crumb span { flex: 1; padding: 0 0 2px 8px; white-space: nowrap; font-size: 12.300px; }
.home { width: 16px; height: 14px; }
.arrow { width: 6px; height: 10px; margin-left: 8px; }
.info { width: 16px; height: 16px; }

.map { height: 757px; position: relative; background: #f2efe9; overflow: hidden; }
.map::after { content: ""; position: absolute; inset: 0; box-shadow: inset 0 -1px 6px rgba(0,0,0,.45); }
.canvas { width: 806px; height: 757px; }
.sand { fill: #f7edd1; }
.scrub { fill: #dfe1b3; }
.water { fill: #aad3df; filter: url(#rough); }
.dot { fill: none; stroke: #aad3df; stroke-width: 5; stroke-linecap: round; }
.stripe { fill: none; stroke: #aad3df; stroke-width: 5; }
.ice { fill: #ddecec; stroke: #9ecdff; stroke-width: 4; filter: url(#rough); }
.wavy { filter: url(#rough); }
.border { fill: none; stroke: #c8b2c6; stroke-width: 3.700; stroke-linejoin: round; }
.secondary { fill: none; stroke: #f8b5a2; stroke-width: 3; stroke-linejoin: round; }
.trunk { fill: none; stroke: #e56e8d; stroke-width: 3.600; stroke-linejoin: round; }
.place text { font: 10px "Noto Sans CJK SC", sans-serif; text-anchor: middle; fill: #222; stroke: #fff; stroke-width: 2px; stroke-opacity: .7; paint-order: stroke; }
.place circle { fill: #fff; stroke: #555; stroke-width: .8; }
.legend { position: absolute; left: 10px; top: 10px; width: 120px; height: 58px; background: #fff; border-radius: 2px; box-shadow: 0 6px 12px rgba(0,0,0,.2); padding: 13px 0 0 9px; }
.legend svg { width: 10px; height: 12px; }
.legend span { display: block; margin: 6px 0 0 7px; line-height: 18px; letter-spacing: .28px; }
.basemap { position: absolute; left: 4px; top: 674px; width: 78px; height: 78px; border: 3px solid #fff; box-shadow: 0 3px 14px rgba(0,0,0,.6); z-index: 1; }
.credit { height: 30px; padding: 2px 0 0 10px; line-height: 17px; font-size: 12px; letter-spacing: .35px; }
a { color: #4281b6; }
.actions a, .bookmarks a { color: inherit; }

/* details panel */
.details { width: 800px; background: #fff; display: flex; box-shadow: 0 0 30px rgba(0,0,0,.75); clip-path: inset(0 0 0 -40px); z-index: 2; }
.detailbody { width: 785px; padding: 12px 16px 0; }
.closebar { height: 36px; display: flex; justify-content: flex-end; margin-right: -7px; }
.closebar svg { width: 22px; height: 23px; }
.detailtabs { height: 40px; border-bottom: 1px solid #ddd; display: flex; }
.detailtabs span { width: 57px; height: 40px; border: 1px solid #ddd; border-bottom-color: #fff; border-radius: 2px 2px 0 0; text-align: center; line-height: 37px; }
dl { margin: 38px 25px 0; width: 703px; height: 624px; border: 1px solid #ddd; display: grid; grid-template-columns: 175px 1fr; grid-template-rows: repeat(13, 39.150px) 57px 56px; line-height: 18px; }
dt, dd { margin: 0; padding: 10px 15px 0; border-bottom: 1px solid #ddd; }
dt:nth-last-of-type(1), dd:last-child { border-bottom: 0; }
dt { background: #f2f0f1; font-weight: 600; color: #000; white-space: nowrap; letter-spacing: .55px; padding-right: 0; }
dd { letter-spacing: .27px; padding-left: 15.500px; }
dd.wide { letter-spacing: .48px; }
.scroll { width: 15px; background: #f1f1f1; display: flex; flex-direction: column; align-items: center; padding: 6px 0; }
.scroll svg { width: 8px; height: 4px; }
.scroll i { width: 11px; height: 614px; background: #c1c1c1; margin: auto 0 5px; }

footer { height: 34px; display: flex; font-size: 12px; line-height: 34px; padding-left: 670px; letter-spacing: .35px; }
footer a:nth-child(1) { width: 109px; }
footer a:nth-child(2) { width: 110px; }
```
